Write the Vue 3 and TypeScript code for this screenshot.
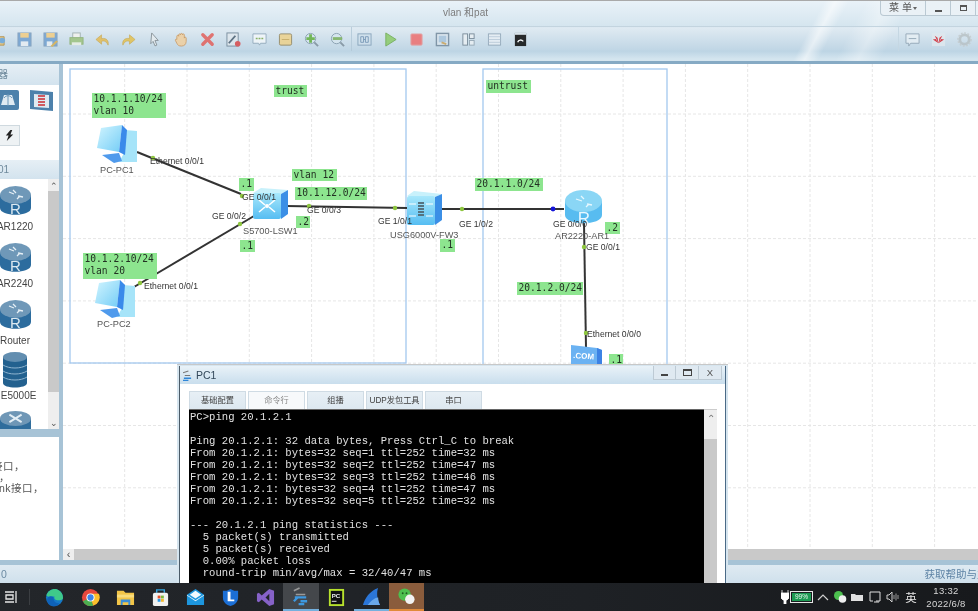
<script setup lang="ts">
const gridX: number[] = [];
for (let x = 125.7; x < 978; x += 62.3) gridX.push(x);
const gridY: number[] = [];
for (let y = 114; y < 560; y += 62.3) gridY.push(y);

const links = [
  [138, 152, 242, 194], [287, 206, 408, 208], [255, 216, 135, 287], [442, 209, 565, 209], [585, 223, 587, 348],
];
const dots = [
  [154, 158], [243, 196], [310, 206], [396, 208], [241, 224], [141, 283], [463, 209], [585, 247], [587, 333],
];
const tags = [
  { x: 275, y: 85, w: 33, h: 12, t: 'trust' },
  { x: 93, y: 93, w: 74, h: 25, t: '10.1.1.10/24\nvlan 10' },
  { x: 293, y: 169, w: 45, h: 12, t: 'vlan 12' },
  { x: 296, y: 187, w: 72, h: 13, t: '10.1.12.0/24' },
  { x: 240, y: 178, w: 15, h: 13, t: '.1' },
  { x: 297, y: 216, w: 14, h: 12, t: '.2' },
  { x: 241, y: 240, w: 15, h: 12, t: '.1' },
  { x: 84, y: 253, w: 74, h: 26, t: '10.1.2.10/24\nvlan 20' },
  { x: 487, y: 80, w: 45, h: 13, t: 'untrust' },
  { x: 476, y: 178, w: 68, h: 13, t: '20.1.1.0/24' },
  { x: 606, y: 222, w: 15, h: 12, t: '.2' },
  { x: 441, y: 239, w: 15, h: 13, t: '.1' },
  { x: 518, y: 282, w: 66, h: 13, t: '20.1.2.0/24' },
  { x: 610, y: 354, w: 14, h: 12, t: '.1' },
];
const notes = [
  { x: 151, y: 161, t: 'Ethernet 0/0/1' },
  { x: 243, y: 197, t: 'GE 0/0/1' },
  { x: 213, y: 216, t: 'GE 0/0/2' },
  { x: 308, y: 210, t: 'GE 0/0/3' },
  { x: 379, y: 221, t: 'GE 1/0/1' },
  { x: 145, y: 286, t: 'Ethernet 0/0/1' },
  { x: 460, y: 224, t: 'GE 1/0/2' },
  { x: 554, y: 224, t: 'GE 0/0/0' },
  { x: 587, y: 247, t: 'GE 0/0/1' },
  { x: 588, y: 334, t: 'Ethernet 0/0/0' },
  { x: 101, y: 170, t: 'PC-PC1', big: true },
  { x: 98, y: 324, t: 'PC-PC2', big: true },
  { x: 244, y: 231, t: 'S5700-LSW1', big: true },
  { x: 391, y: 235, t: 'USG6000V-FW3', big: true },
  { x: 556, y: 236, t: 'AR2220-AR1', big: true },
];
const tabs = ['基础配置', '命令行', '组播', 'UDP发包工具', '串口'];
const term = `PC>ping 20.1.2.1

Ping 20.1.2.1: 32 data bytes, Press Ctrl_C to break
From 20.1.2.1: bytes=32 seq=1 ttl=252 time=32 ms
From 20.1.2.1: bytes=32 seq=2 ttl=252 time=47 ms
From 20.1.2.1: bytes=32 seq=3 ttl=252 time=46 ms
From 20.1.2.1: bytes=32 seq=4 ttl=252 time=47 ms
From 20.1.2.1: bytes=32 seq=5 ttl=252 time=32 ms

--- 20.1.2.1 ping statistics ---
  5 packet(s) transmitted
  5 packet(s) received
  0.00% packet loss
  round-trip min/avg/max = 32/40/47 ms`;
const routers = ['AR1220', 'AR2240', 'Router'];
</script>

<template>
  <div class="app">
    <header class="head">
      <div class="titlebar">
        <span class="title">vlan 和pat</span>
        <div class="menu">菜 单<i class="caret"></i></div>
        <div class="wbtn"><i class="w-min"></i></div>
        <div class="wbtn"><i class="w-res"></i></div>
        <div class="wbtn last"></div>
      </div>
      <div class="toolbar">
        <div class="tool"><svg viewBox="0 0 16 16"><path d="M1 3h5l2 2h6v9H1z" fill="#e9c476" stroke="#b08b3e"/><circle cx="12" cy="9" r="3" fill="#6aa5d8"/></svg></div>
        <div class="tool"><svg viewBox="0 0 16 16"><rect x="1" y="1" width="14" height="14" fill="#6f9fd0" stroke="#7f9cb8"/><rect x="3.500" y="1" width="9" height="5" fill="#f2cc82"/><rect x="4" y="10" width="8" height="5" fill="#e8eef3"/></svg></div>
        <div class="tool"><svg viewBox="0 0 16 16"><rect x="1" y="1" width="14" height="14" fill="#6f9fd0" stroke="#7f9cb8"/><rect x="3.500" y="1" width="9" height="5" fill="#f2cc82"/><rect x="4" y="10" width="6" height="5" fill="#e8eef3"/><path d="M8 15l6-6 2 1-6 6z" fill="#d8b050"/></svg></div>
        <div class="tool"><svg viewBox="0 0 16 16"><rect x="4" y="1" width="8" height="6" fill="#f3f3ee" stroke="#9aa"/><rect x="1" y="6" width="14" height="7" fill="#9cc27e" stroke="#8aae70"/><rect x="3" y="11" width="10" height="3" fill="#e9efe4"/></svg></div>
        <div class="tool"><svg viewBox="0 0 16 16"><path d="M14 14c1-5-2-8-7-7V3L1 8l6 5V10c3-1 5 0 7 4z" fill="#e3bb55" stroke="#c39b38" stroke-width=".6"/></svg></div>
        <div class="tool"><svg viewBox="0 0 16 16"><path d="M2 14c-1-5 2-8 7-7V3l6 5-6 5V10c-3-1-5 0-7 4z" fill="#e3c14f" stroke="#c39b38" stroke-width=".6"/></svg></div>
        <div class="tool"><svg viewBox="0 0 16 16"><path d="M5 1l7 8H8.500l2 5-2 .8L6.500 10 4 12.500z" fill="#e6ecef" stroke="#7d868c"/></svg></div>
        <div class="tool"><svg viewBox="0 0 16 16"><path d="M3 8V4.500a1 1 0 012 0V3a1 1 0 012 0v-.5a1 1 0 012 0V3a1 1 0 012 0v3.500a1 1 0 012 0V10c0 3-2 5-5 5s-4-1-5-3L1.500 9c-.5-1 1-2 1.500-1z" fill="#f0cf9f" stroke="#c48a4a" stroke-width=".8"/></svg></div>
        <div class="tool"><svg viewBox="0 0 16 16"><path d="M3 3l10 10M13 3L3 13" stroke="#e2605c" stroke-width="3.600" stroke-linecap="round"/></svg></div>
        <div class="tool"><svg viewBox="0 0 16 16"><rect x="1" y="1" width="12" height="14" fill="#dfe7ed" stroke="#6a7f90"/><path d="M3 12l7-8" stroke="#4a5f70" stroke-width="2"/><circle cx="12.500" cy="12.500" r="3" fill="#d9494a"/></svg></div>
        <div class="tool"><svg viewBox="0 0 16 16"><path d="M1 2h14v10H9l-1 2-1-2H1z" fill="#f3f8fb" stroke="#8ba3b5"/><path d="M4 7h8" stroke="#7da84f" stroke-width="1.600" stroke-dasharray="2 1"/></svg></div>
        <div class="tool"><svg viewBox="0 0 16 16"><rect x="1.500" y="2" width="13" height="12" rx="1.500" fill="#eed28c" stroke="#8b7f58"/><path d="M4 8h8" stroke="#c7a757"/></svg></div>
        <div class="tool"><svg viewBox="0 0 16 16"><circle cx="7" cy="7" r="5.500" fill="#d6e6ef" stroke="#7e95a6"/><path d="M11 11l4 4" stroke="#7e8f9c" stroke-width="2"/><path d="M7 2.500v9M2.500 7h9" stroke="#62b03f" stroke-width="3"/></svg></div>
        <div class="tool"><svg viewBox="0 0 16 16"><circle cx="7" cy="7" r="5.500" fill="#d6e6ef" stroke="#7e95a6"/><path d="M11 11l4 4" stroke="#7e8f9c" stroke-width="2"/><path d="M3 7h10" stroke="#7ab05c" stroke-width="3"/></svg></div>
        <div class="tool sep"><svg viewBox="0 0 16 16"><rect x="1" y="2" width="14" height="12" fill="#cfe0ec" stroke="#7f9db5"/><path d="M4 5h3v6H4zM9 5h3v6H9zM7 8h2" fill="none" stroke="#6d8fb0"/></svg></div>
        <div class="tool"><svg viewBox="0 0 16 16"><path d="M3 1l11 7-11 7z" fill="#8ccb6a" stroke="#6aa84c"/></svg></div>
        <div class="tool"><svg viewBox="0 0 16 16"><rect x="2" y="2" width="12" height="12" rx="1" fill="#ee6f6f" stroke="#e2a0a0"/></svg></div>
        <div class="tool"><svg viewBox="0 0 16 16"><rect x="1.500" y="1.500" width="13" height="13" fill="#dbe6ee" stroke="#73899c" stroke-width="1.500"/><rect x="4" y="4" width="8" height="7" fill="#a7c4dc"/><path d="M7 11l5 2" stroke="#c9a35c" stroke-width="2"/></svg></div>
        <div class="tool"><svg viewBox="0 0 16 16"><rect x="2" y="2" width="5" height="12" fill="#eaf0f4" stroke="#6c7f8e"/><rect x="9" y="2" width="5" height="5" fill="#eaf0f4" stroke="#6c7f8e"/><rect x="9" y="9" width="5" height="5" fill="#eaf0f4" stroke="#8ea0ad"/></svg></div>
        <div class="tool"><svg viewBox="0 0 16 16"><rect x="1.500" y="2" width="13" height="12" fill="#e8eff5" stroke="#8ca2b4"/><path d="M2 5h12M2 8h12M2 11h12" stroke="#b9cad7"/></svg></div>
        <div class="tool"><svg viewBox="0 0 16 16"><rect x="2" y="1" width="12" height="14" fill="#0a0a0a"/><rect x="2" y="1" width="12" height="2" fill="#d9e3ea"/><path d="M5 11c1-3 4-3 6-1" stroke="#fff" stroke-width="1.500" fill="none"/></svg></div>
        <div class="tools-right">
          <div class="tool wide"><svg viewBox="0 0 16 16"><path d="M1 2h14v10h-9l-2 3v-3H1z" fill="#e6eff5" stroke="#8ca0b0"/><path d="M4 7h8" stroke="#8ca0b0"/></svg></div>
          <div class="tool wide"><svg viewBox="0 0 16 16"><rect x="1" y="1" width="14" height="14" fill="#dfe8ee"/><path d="M8 12L4 4l3 2zM8 12l4-8-3 2zM8 12L2 8l3-.5zM8 12l6-4-3-.5z" fill="#d3242f"/></svg></div>
          <div class="tool wide"><svg viewBox="0 0 16 16"><circle cx="8" cy="8" r="5" fill="none" stroke="#b8c2c6" stroke-width="3"/><circle cx="8" cy="8" r="7" fill="none" stroke="#c3cbce" stroke-width="1.600" stroke-dasharray="2 1.600"/></svg></div>
        </div>
      </div>
      <div class="strip"></div>
    </header>

    <main class="main">
      <aside class="side">
        <div class="phead">器</div>
        <div class="kinds">
          <div class="kind-row">
            <svg class="k1" viewBox="0 0 19 22"><rect x="-6" y="1" width="25" height="20" rx="2" fill="#4d81ab"/><path d="M1 16l3-10h8l3 10z" fill="#dfeaf2"/><path d="M8 5v12M4 9c2-3 6-3 8 0" stroke="#6c97b8" fill="none"/></svg>
            <svg class="k2" viewBox="0 0 23 23"><path d="M0 1l23 2v19L0 20z" fill="#4d81ab"/><path d="M4 5l15 1v13L4 18z" fill="#dfeaf2"/><path d="M8 7h7M8 10h7M8 13h7M8 16h7" stroke="#d05a60" stroke-width="2"/></svg>
          </div>
          <div class="bolt"><svg viewBox="0 0 12 12"><path d="M7 0L2 6h3L3 12l7-7H7l2-5z" fill="#222"/></svg></div>
        </div>
        <div class="phead second">01</div>
        <div class="list">
          <div class="items">
            <div v-for="r in routers" :key="r" class="item">
              <svg class="r-ico" viewBox="0 0 31 29"><use href="#rtr" /></svg>
              <span>{{ r }}</span>
            </div>
            <div class="item ne">
              <svg class="ne-ico" viewBox="0 0 24 36"><path d="M0 5h24v26c0 6-24 6-24 0z" fill="#23618f"/><ellipse cx="12" cy="5" rx="12" ry="5" fill="#628eb0"/><path d="M0 13c6 4 18 4 24 0M0 19c6 4 18 4 24 0M0 25c6 4 18 4 24 0" stroke="#8fb4cf" fill="none"/></svg>
              <span>NE5000E</span>
            </div>
            <div class="item cx">
              <svg class="r-ico" viewBox="0 0 33 29"><path d="M0 8h33v21H0z" fill="#2f6d9c"/><ellipse cx="16.500" cy="8" rx="16.500" ry="8" fill="#6f97b6"/><path d="M10 4l13 8M23 4l-13 8" stroke="#e3eef5" stroke-width="2"/></svg>
            </div>
          </div>
          <div class="sbar">
            <div class="sarrow">⌃</div>
            <div class="sthumb"></div>
            <div class="sarrow low">⌄</div>
          </div>
        </div>
        <div class="desc">
          <p class="d1">接口，</p>
          <p class="d2">，</p>
          <p class="d3">nk接口，</p>
        </div>
      </aside>

      <section class="work">
        <div class="canvas">
          <svg class="scene" viewBox="64 64 914 485">
            <defs>
              <linearGradient id="cy" x1="0" y1="0" x2="0" y2="1"><stop offset="0" stop-color="#a8e8fb"/><stop offset="1" stop-color="#56bdf2"/></linearGradient>
              <linearGradient id="scr" x1="0" y1="0" x2="1" y2="1"><stop offset="0" stop-color="#d2f5ff"/><stop offset="1" stop-color="#74cdf6"/></linearGradient>
              <g id="pc">
                <path d="M28 5l12 1v31l-18 0 4-7z" fill="#a6e4f9"/>
                <path d="M4 3L25 0l-3 27L0 23z" fill="url(#scr)"/>
                <path d="M25 0l5 5-2 25-6-3z" fill="#3a8aea"/>
                <path d="M5 30l17-2 3 8-8 2z" fill="#4f9aec"/>
              </g>
              <g id="rtr">
                <path d="M0 9v13c0 9 31 9 31 0V9z" fill="#2c6c9e"/>
                <ellipse cx="15.500" cy="9" rx="15.500" ry="9" fill="#6f98b8"/>
                <path d="M9 6l5 2M13 4l3 3M18 10l5 1M17 13l3-3" stroke="#e6f0f6" stroke-width="1.300"/>
                <text x="15.500" y="28" font-size="15" font-family="Liberation Sans" text-anchor="middle" fill="#dce9f1">R</text>
              </g>
            </defs>
            <line v-for="x in gridX" :key="'x' + x" :x1="x" :x2="x" y1="64" y2="549" class="grid" />
            <line v-for="y in gridY" :key="'y' + y" :y1="y" :y2="y" x1="64" x2="978" class="grid" />
            <rect x="71" y="69" width="336" height="294" class="zone" />
            <rect x="484" y="69" width="184" height="300" class="zone" />
            <line v-for="(l, i) in links" :key="i" :x1="l[0]" :y1="l[1]" :x2="l[2]" :y2="l[3]" class="link" />
            <use href="#pc" x="98" y="125" />
            <use href="#pc" x="96" y="280" />
            <!-- switch -->
            <path d="M254 193l8-5 27 2-7 4z" fill="#c8f1fb" />
            <rect x="254" y="193" width="28" height="26" rx="2" fill="url(#cy)" />
            <path d="M282 194l7-4v24l-7 5z" fill="#3b8fe6" />
            <path d="M260 200l6 5M276 200l-6 5M260 212l6-5M276 212l-6-5" stroke="#fff" stroke-width="1.600" />
            <circle cx="268" cy="206" r="2" fill="#fff" />
            <!-- firewall -->
            <path d="M408 196l7-5 28 3-7 3z" fill="#c8f1fb" />
            <rect x="408" y="196" width="28" height="29" rx="2" fill="url(#cy)" />
            <path d="M436 197l7-3v26l-7 5z" fill="#3b8fe6" />
            <path d="M419 203h6M419 206h6M419 209h6M419 212h6M419 215h6" stroke="#55727f" stroke-width="1.800" />
            <path d="M410 204h7M410 216h7M427 204h7M427 216h7" stroke="#fff" />
            <!-- router -->
            <path d="M566 201v14c0 11 37 11 37 0v-14z" fill="#58bcf0" />
            <ellipse cx="584.500" cy="201" rx="18.500" ry="11" fill="#8ad6f5" />
            <path d="M577 199l6 2M582 196l3 3M588 204l5 1M587 207l3-3" stroke="#e6f8ff" stroke-width="1.300" />
            <text x="585" y="224" font-size="17" font-family="Liberation Sans" text-anchor="middle" fill="#e8f8ff">R</text>
            <!-- server -->
            <path d="M572 345l26 3 5 2v20h-31z" fill="#6bb2f2" />
            <path d="M598 348l5 2v20h-5z" fill="#3c82e4" />
            <text x="574" y="358" font-size="8" font-weight="700" font-family="Liberation Sans" fill="#fff" transform="rotate(4 574 358)">.COM</text>
            <circle v-for="(d, i) in dots" :key="'d' + i" :cx="d[0]" :cy="d[1]" r="2.200" fill="#8ec63f" />
            <circle cx="554" cy="209" r="2.400" fill="#1414d8" />
          </svg>
          <div
            v-for="(t, i) in tags"
            :key="'t' + i"
            class="tag"
            :style="{ left: t.x - 64 + 'px', top: t.y - 64 + 'px', width: t.w + 'px', height: t.h + 'px' }"
          >{{ t.t }}</div>
          <div
            v-for="(n, i) in notes"
            :key="'n' + i"
            class="note"
            :class="{ big: n.big }"
            :style="{ left: n.x - 64 + 'px', top: n.y - 70 + 'px' }"
          >{{ n.t }}</div>
        </div>
        <div class="hbar"><span class="harrow">‹</span><div class="hthumb"></div></div>
      </section>
    </main>

    <footer class="status">
      <span class="s0">0</span>
      <span class="help">获取帮助与支持</span>
    </footer>

    <nav class="taskbar">
      <div class="taskview"><svg viewBox="0 0 12 12"><path d="M0 1h9M0 11h9M11 0v12M1 4h7v4H1z" fill="none" stroke="#e6e6e6" stroke-width="1.300"/></svg></div>
      <div class="tsep"></div>
      <div class="apps">
        <div class="app-i"><svg viewBox="0 0 20 20"><circle cx="10" cy="10" r="9" fill="#1478c8"/><path d="M1.500 8C3 2 9 0 13 1.500c4 1.500 6 5 6 9 0 1.500-2 2.500-5 2.500-3 0-5-1.500-4-4-3 0-7 1-8.500-1z" fill="#3fc98a"/><path d="M7 19c-4-1-6-6-4-9 2-2 6-2 6 1 0 3 2 5 6 5-2 3-5 4-8 3z" fill="#0f62b8"/></svg></div>
        <div class="app-i"><svg viewBox="0 0 20 20"><circle cx="10" cy="10" r="9" fill="#e6483d"/><path d="M10 10L1.900 14A9 9 0 0 0 13 18.500z" fill="#4cae50"/><path d="M10 10l3 8.500A9 9 0 0 0 18.800 6H10z" fill="#fbc02d"/><circle cx="10" cy="10" r="4.300" fill="#fff"/><circle cx="10" cy="10" r="3.300" fill="#3d85e8"/></svg></div>
        <div class="app-i"><svg viewBox="0 0 20 20"><path d="M1 3h7l2 2h9v13H1z" fill="#f2c548"/><rect x="1" y="7" width="18" height="3" fill="#f8dc7c"/><path d="M5 12h10v6h-2v-3H7v3H5z" fill="#3a8ed8"/></svg></div>
        <div class="app-i"><svg viewBox="0 0 20 20"><path d="M6 5V2h8v3" fill="none" stroke="#34a5e0" stroke-width="1.500"/><rect x="2" y="5" width="16" height="14" rx="2" fill="#f1f1ef"/><rect x="7" y="8" width="3" height="3" fill="#e8502a"/><rect x="10.500" y="8" width="3" height="3" fill="#7db93c"/><rect x="7" y="11.500" width="3" height="3" fill="#2a9ae8"/><rect x="10.500" y="11.500" width="3" height="3" fill="#f6b92b"/></svg></div>
        <div class="app-i"><svg viewBox="0 0 20 20"><path d="M1 7l9-6 9 6v11H1z" fill="#1d96de"/><path d="M1 7l9 6 9-6v1l-9 6-9-6z" fill="#e8f5fc"/><path d="M4 7l6-4 6 4-6 4z" fill="#f2f9fd"/></svg></div>
        <div class="app-i"><svg viewBox="0 0 20 20"><path d="M10 1c3 2 5 2 8 2v7c0 5-4 8-8 9-4-1-8-4-8-9V3c3 0 5 0 8-2z" fill="#1c6fd6"/><path d="M9 5h3v8h4v2H9z" fill="#fff" transform="translate(-2 -1)"/></svg></div>
        <div class="app-i"><svg viewBox="0 0 20 20"><path d="M14 1l5 2v14l-5 2-8-7-3 3-2-1V6l2-1 3 3zM14 6l-4 4 4 4z" fill="#8662c8"/></svg></div>
        <div class="app-i on-blue"><svg viewBox="0 0 20 20"><path d="M3 4l6-3M5 8h10" stroke="#9a9a9a" stroke-width="1.600"/><path d="M4 11h12M3 15l4-4M10 15h7M8 18h6" stroke="#3d98e0" stroke-width="2.400"/></svg></div>
        <div class="app-i"><svg viewBox="0 0 20 20"><rect x="2" y="1" width="16" height="18" fill="#b7e12d"/><rect x="4" y="3" width="12" height="14" fill="#111"/><text x="5" y="10" font-size="6.500" font-weight="700" font-family="Liberation Sans" fill="#eee">PC</text><path d="M5 14h5" stroke="#eee"/></svg></div>
        <div class="app-i on-line"><svg viewBox="0 0 20 20"><path d="M1 19C3 12 8 4 17 1c-2 5-1 12 2 18z" fill="#2b76d8"/><path d="M6 19c2-3 7-8 11-8 0 3 1 6 2 8z" fill="#6aa8ea"/></svg></div>
        <div class="app-i on-orange"><svg viewBox="0 0 20 20"><circle cx="8" cy="8" r="6.500" fill="#4cc04f"/><circle cx="13.500" cy="13" r="5" fill="#f2f2f2"/><circle cx="6" cy="6.500" r="1" fill="#1d5c20"/><circle cx="10" cy="6.500" r="1" fill="#1d5c20"/></svg></div>
      </div>
      <div class="tray">
        <svg class="plug" viewBox="0 0 8 14"><path d="M1 0v3M7 0v3M0 3h8v5l-2 2H5v4H3v-4H2L0 8z" stroke="#fff" stroke-width=".8" fill="#fff"/></svg>
        <div class="batt"><span>99%</span></div>
        <svg class="tico caret-up" viewBox="0 0 12 8"><path d="M1 7l5-5 5 5" fill="none" stroke="#cfcfcf" stroke-width="1.200"/></svg>
        <svg class="tico" viewBox="0 0 14 14"><circle cx="5.500" cy="5.500" r="4.500" fill="#4cc04f"/><circle cx="9.500" cy="9" r="3.800" fill="#efefef"/></svg>
        <svg class="tico gap2" viewBox="0 0 14 14"><path d="M1 4h4l1 1h7v6H1z" fill="#e0e0e0"/></svg>
        <svg class="tico gap4" viewBox="0 0 14 14"><path d="M2 2h10v9H8M2 2v9h3" fill="none" stroke="#e0e0e0"/><path d="M6 12h5" stroke="#e0e0e0"/></svg>
        <svg class="tico gap4" viewBox="0 0 14 14"><path d="M1 5h2l3-3v10L3 9H1z" fill="none" stroke="#d0d0d0"/><path d="M8 5v4M10 3.500v7M12 5v4" stroke="#9a9a9a"/></svg>
        <span class="ime">英</span>
        <div class="clock"><span>13:32</span><span>2022/6/8</span></div>
      </div>
    </nav>

    <div class="win">
      <div class="win-in">
        <div class="win-title">
          <svg class="win-ico" viewBox="0 0 10 12"><path d="M0 3l6-2M2 6h6" stroke="#777" stroke-width="1.200"/><path d="M1 9h8M0 11.500h6" stroke="#2f86d8" stroke-width="1.600"/></svg>
          <span class="win-name">PC1</span>
          <div class="win-ctl">
            <div class="cbtn"><i class="c-min"></i></div>
            <div class="cbtn"><i class="c-max"></i></div>
            <div class="cbtn close">X</div>
          </div>
        </div>
        <div class="tabs">
          <div v-for="(t, i) in tabs" :key="t" class="tab" :class="{ active: i === 1 }">{{ t }}</div>
        </div>
        <div class="term-row">
          <pre class="term">{{ term }}</pre>
          <div class="term-bar"><div class="term-up">⌃</div><div class="term-thumb"></div></div>
        </div>
      </div>
    </div>
  </div>
</template>

<style scoped>
.app {
  position: relative;
  width: 978px;
  height: 611px;
  overflow: hidden;
  display: flex;
  flex-direction: column;
  background: #a7c3d6;
  font-family: "Liberation Sans", "Noto Sans CJK SC", sans-serif;
  filter: blur(0.4px);
}
.head {
  height: 64px;
  flex: none;
  display: flex;
  flex-direction: column;
  border-top: 1px solid #a9a9a9;
  box-sizing: border-box;
  background:
    linear-gradient(118deg, transparent 0 728px, rgba(255,255,255,.55) 738px, transparent 750px, transparent 765px, rgba(255,255,255,.35) 785px, transparent 805px),
    linear-gradient(180deg, #e9f2f8 0, #d5e5ef 25px, #dfeaf2 27px, #c0d6e5 49px, #bcd4e4 50px, #d4e5ef 58px);
}
.titlebar {
  height: 25px;
  display: flex;
  align-items: flex-start;
  border-bottom: 1px solid #c3d4df;
  flex: none;
}
.title {
  margin: 5px 0 0 443px;
  font-size: 10px;
  line-height: 13px;
  color: #7c7c7c;
  font-family: "Liberation Sans", "Noto Sans CJK SC", sans-serif;
}
.menu {
  margin-left: auto;
  width: 46px;
  height: 15px;
  box-sizing: border-box;
  border: 1px solid #bac9d3;
  border-top: none;
  border-bottom-left-radius: 4px;
  font-size: 10px;
  line-height: 14px;
  color: #555;
  text-align: center;
  background: #eaf1f6;
  display: flex;
  justify-content: center;
  align-items: center;
  gap: 1px;
}
.caret {
  width: 0;
  height: 0;
  border-left: 2px solid transparent;
  border-right: 2px solid transparent;
  border-top: 3px solid #666;
}
.wbtn {
  width: 25px;
  height: 15px;
  flex: none;
  box-sizing: border-box;
  border-right: 1px solid #bac9d3;
  border-bottom: 1px solid #bac9d3;
  background: #eaf1f6;
  display: flex;
  align-items: center;
  justify-content: center;
}
.wbtn.last { margin-right: -23px; }
.w-min { width: 7px; height: 2px; background: #555; margin-top: 6px; }
.w-res { width: 7px; height: 6px; border: 1px solid #555; border-top-width: 2px; box-sizing: border-box; }
.toolbar {
  height: 24px;
  flex: none;
  display: flex;
  align-items: center;
  margin-left: -15px;
}
.tool {
  width: 26.150px;
  height: 24px;
  flex: none;
  box-sizing: border-box;
  display: flex;
  align-items: center;
  justify-content: center;
  opacity: .85;
}
.tool svg { width: 15px; height: 15px; display: block; }
.tool.sep { border-left: 1px solid #b3c9d8; }
.tools-right {
  margin-left: auto;
  display: flex;
  border-left: 1px solid #c5d7e3;
  padding-right: 2px;
  width: 80px;
  box-sizing: border-box;
}
.tool.wide { width: 26px; }
.tool.wide svg { width: 15px; height: 15px; }
.strip {
  flex: 1;
  border-bottom: 3px solid #86aac4;
  margin-top: 9px;
}
.main { flex: none; height: 501px; display: flex; }
.side { width: 59px; flex: none; display: flex; flex-direction: column; overflow: hidden; background: #a7c3d6; }
.phead {
  height: 21px;
  flex: none;
  background: linear-gradient(180deg, #e6eff5, #d3e3ee);
  font-size: 10px;
  line-height: 21px;
  color: #6f8a9c;
  margin-left: -2px;
}
.phead.second { height: 19px; line-height: 19px; margin-left: -2px; }
.kinds { height: 75px; flex: none; background: #fff; box-sizing: border-box; padding-top: 4px; }
.kind-row { display: flex; }
.k1 { width: 19px; height: 22px; }
.k2 { width: 23px; height: 23px; margin-left: 11px; }
.bolt {
  width: 20px;
  height: 21px;
  margin-top: 13px;
  box-sizing: border-box;
  border: 1px solid #cfd9df;
  border-left: none;
  background: #eef2f4;
  display: flex;
  align-items: center;
  justify-content: center;
}
.bolt svg { width: 11px; height: 11px; }
.list { height: 250px; flex: none; display: flex; background: #fff; overflow: hidden; }
.items { width: 48px; flex: none; padding: 7px 0 0 0; box-sizing: border-box; display: flex; flex-direction: column; gap: 10px; overflow: hidden; }
.item { width: 30px; display: flex; flex-direction: column; align-items: center; flex: none; }
.item span { font-size: 10px; line-height: 12px; margin-top: 6px; color: #444; white-space: nowrap; }
.r-ico { width: 31px; height: 29px; flex: none; }
.ne { margin-top: -5px; }
.ne-ico { width: 24px; height: 36px; flex: none; }
.ne span { margin-top: 2px; }
.cx { margin-top: -2px; }
.sbar { width: 11px; flex: none; background: #eee; display: flex; flex-direction: column; }
.sarrow { height: 12px; font-size: 9px; line-height: 14px; text-align: center; color: #555; }
.sarrow.low { height: 37px; line-height: 62px; }
.sthumb { height: 201px; background: #c9c9c9; flex: none; }
.desc {
  margin-top: 8px;
  height: 123px;
  background: #fff;
  flex: none;
  box-sizing: border-box;
  padding-top: 24px;
  font-size: 10.5px;
  color: #555;
  overflow: hidden;
}
.desc p { margin: 0; line-height: 11px; white-space: nowrap; letter-spacing: .5px; }
.d1 { margin-left: -8px !important; }
.d2 { margin-left: -1px !important; }
.d3 { margin-left: -1px !important; }
.work { flex: 1; margin-left: 4px; display: flex; flex-direction: column; min-width: 0; }
.canvas { position: relative; height: 485px; background: #fff; overflow: hidden; flex: none; }
.scene { position: absolute; left: 0; top: 0; width: 914px; height: 485px; }
.grid { stroke: #e6e6e6; stroke-width: 1; stroke-dasharray: 3 2; }
.zone { fill: none; stroke: #a3c8ee; stroke-width: 1.300; }
.link { stroke: #333; stroke-width: 2; }
.tag {
  position: absolute;
  background: #8de58f;
  font-family: "DejaVu Sans Mono", monospace;
  font-size: 9.6px;
  line-height: 12px;
  color: #223022;
  white-space: pre;
  padding-left: 1.500px;
  box-sizing: border-box;
  text-align: left;
}
.note {
  position: absolute;
  font-size: 8.600px;
  line-height: 12px;
  color: #333;
  white-space: nowrap;
}
.note.big { font-size: 9.200px; color: #555; }
.hbar { height: 11px; background: #eee; display: flex; flex: none; }
.harrow { width: 11px; font-size: 11px; line-height: 10px; text-align: center; color: #555; }
.hthumb { flex: 1; background: #c9c9c9; }
.status {
  height: 18px;
  flex: none;
  display: flex;
  justify-content: space-between;
  background: linear-gradient(180deg, #dfeaf2, #cfe0ec);
  font-size: 10.500px;
  line-height: 18px;
  color: #6c8ba3;
  overflow: hidden;
  white-space: nowrap;
}
.s0 { margin-left: 1px; }
.help { margin-right: -20px; color: #5d82a4; }
.taskbar {
  height: 28px;
  flex: none;
  display: flex;
  align-items: center;
  background: linear-gradient(90deg, #23262a, #1e2125 60%, #17191c);
  position: relative;
  z-index: 2;
}
.taskview { width: 29px; flex: none; box-sizing: border-box; padding-left: 5px; display: flex; }
.taskview svg { width: 12px; height: 12px; }
.tsep { width: 1px; height: 16px; background: #3b3e42; flex: none; }
.apps { display: flex; margin-left: 7.400px; height: 100%; }
.app-i {
  width: 35.150px;
  height: 100%;
  flex: none;
  display: flex;
  align-items: center;
  justify-content: center;
  box-sizing: border-box;
}
.app-i svg { width: 19px; height: 19px; }
.on-blue { background: #44474b; border-bottom: 2px solid #74b0de; }
.on-line { border-bottom: 2px solid #74b0de; }
.on-orange { background: #8a5c3c; border-bottom: 2px solid #e08a3a; }
.tray { margin-left: auto; display: flex; align-items: center; padding-right: 12px; height: 100%; }
.plug { width: 8px; height: 14px; }
.batt {
  margin-left: 1px;
  width: 23px;
  height: 12px;
  box-sizing: border-box;
  border: 1px solid #e8e8e8;
  padding: 1px;
  display: flex;
  position: relative;
}
.batt span {
  flex: 1;
  background: #1c9a52;
  color: #e8f6ec;
  font-size: 6.500px;
  line-height: 8px;
  text-align: center;
}
.tico { width: 14px; height: 14px; margin-left: 3px; flex: none; }
.caret-up { width: 12px; height: 8px; margin-left: 4px; margin-right: 1px; }
.gap2 { margin-left: 3px; }
.gap4 { margin-left: 4px; }
.ime { margin-left: 4px; width: 14px; font-size: 11.500px; color: #e6e6e6; text-align: center; flex: none; }
.clock { margin-left: 8px; width: 40px; display: flex; flex-direction: column; align-items: center; font-size: 9.500px; line-height: 13px; color: #d6d6d6; white-space: nowrap; letter-spacing: .3px; }
.win {
  position: absolute;
  left: 177px;
  top: 364px;
  width: 551px;
  height: 219px;
  box-sizing: border-box;
  padding: 1px 2px 0 2px;
  background: #d6e5ef;
  border-top: 1px solid #c8c8c8;
}
.win-in {
  height: 100%;
  background: #fff;
  border-left: 1px solid #4b5b68;
  border-right: 1px solid #4b6a86;
  display: flex;
  flex-direction: column;
}
.win-title {
  height: 18px;
  flex: none;
  background: linear-gradient(180deg, #e9f2f8, #c9deed);
  display: flex;
  align-items: center;
  padding-left: 3px;
}
.win-ico { width: 9px; height: 11px; }
.win-name { margin-left: 4px; font-size: 10.500px; color: #33485a; }
.win-ctl { margin-left: auto; display: flex; height: 14px; align-self: flex-start; margin-right: 3px; }
.cbtn {
  width: 23px;
  height: 14px;
  box-sizing: border-box;
  border: 1px solid #bdcad4;
  border-top: none;
  border-left: none;
  background: #dfe9f1;
  display: flex;
  align-items: center;
  justify-content: center;
  font-size: 9.500px;
  color: #555;
}
.cbtn:first-child { border-left: 1px solid #bdcad4; }
.c-min { width: 7px; height: 2px; background: #444; margin-top: 5px; }
.c-max { width: 9px; height: 7px; border: 1px solid #444; border-top-width: 2px; box-sizing: border-box; }
.tabs { display: flex; gap: 2px; padding: 7px 0 0 9px; height: 25px; box-sizing: border-box; flex: none; }
.tab {
  width: 57px;
  height: 18px;
  box-sizing: border-box;
  border: 1px solid #cfdbe4;
  border-bottom: none;
  background: linear-gradient(180deg, #e7eff5, #dde8f0);
  font-size: 8.200px;
  line-height: 17px;
  text-align: center;
  color: #3f3f3f;
  white-space: nowrap;
  overflow: hidden;
}
.tab.active { background: #f7f9fb; color: #8a8a8a; }
.term-row { flex: 1; display: flex; margin-left: 9px; margin-right: 8px; min-height: 0; }
.term {
  flex: 1;
  margin: 0;
  background: #000;
  border-top: 1px solid #666;
  box-sizing: border-box;
  padding: 1px 0 0 1px;
  font-family: "Liberation Mono", monospace;
  font-size: 10.600px;
  font-weight: 400;
  line-height: 12px;
  color: #e0e0e0;
  overflow: hidden;
}
.term-bar { width: 13px; flex: none; background: #eee; display: flex; flex-direction: column; border-top: 1px solid #ccc; box-sizing: border-box; }
.term-up { height: 29px; font-size: 10px; line-height: 17px; text-align: center; color: #777; flex: none; }
.term-thumb { flex: 1; background: #c9c9c9; }
</style>

<style>
html, body { margin: 0; overflow: hidden; background: #a7c3d6; }
</style>
